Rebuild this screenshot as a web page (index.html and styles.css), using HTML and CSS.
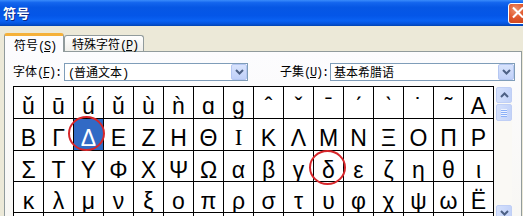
FILE: index.html
```html
<!DOCTYPE html>
<html>
<head>
<meta charset="utf-8">
<link rel="stylesheet" href="styles.css">
</head>
<body>
<div class="window">
  <div class="titlebar">
    <span class="title">符号</span>
    <span class="close"><svg width="21" height="21" viewBox="0 0 21 21"><path d="M6 6 L15 15 M15 6 L6 15" stroke="#fff" stroke-width="2.2" stroke-linecap="square"/></svg></span>
  </div>
  <div class="body">
    <div class="tabs">
      <div class="tab active">符号<span class="hw">(<u>S</u>)</span></div>
      <div class="tab">特殊字符<span class="hw">(<u>P</u>)</span></div>
    </div>
    <div class="panel">
      <div class="fontrow">
        <span class="lbl lbl1">字体<span class="hw">(<u>F</u>):</span></span>
        <div class="combo c1"><span class="ctext"><span class="hw">(</span>普通文本<span class="hw">)</span></span><span class="drop"><svg width="9" height="6" viewBox="0 0 9 6"><path d="M1 1 L4.5 4.5 L8 1" stroke="#4D6185" stroke-width="2" fill="none"/></svg></span></div>
        <span class="lbl lbl2">子集<span class="hw">(<u>U</u>):</span></span>
        <div class="combo c2"><span class="ctext">基本希腊语</span><span class="drop"><svg width="9" height="6" viewBox="0 0 9 6"><path d="M1 1 L4.5 4.5 L8 1" stroke="#4D6185" stroke-width="2" fill="none"/></svg></span></div>
      </div>
      <div class="gridwrap">
        <div class="grid">
          <div class="cell">ǔ</div><div class="cell">ū</div><div class="cell">ú</div><div class="cell">ǔ</div><div class="cell">ù</div><div class="cell">ǹ</div><div class="cell">ɑ</div><div class="cell">ɡ</div><div class="cell">ˆ</div><div class="cell">ˇ</div><div class="cell">ˉ</div><div class="cell">ˊ</div><div class="cell">ˋ</div><div class="cell">˙</div><div class="cell">˜</div><div class="cell">Α</div>
          <div class="cell">Β</div><div class="cell">Γ</div><div class="cell sel">Δ<span class="ring ring1"></span></div><div class="cell">Ε</div><div class="cell">Ζ</div><div class="cell">Η</div><div class="cell">Θ</div><div class="cell serif">Ι</div><div class="cell">Κ</div><div class="cell">Λ</div><div class="cell">Μ</div><div class="cell">Ν</div><div class="cell">Ξ</div><div class="cell">Ο</div><div class="cell">Π</div><div class="cell">Ρ</div>
          <div class="cell">Σ</div><div class="cell">Τ</div><div class="cell">Υ</div><div class="cell">Φ</div><div class="cell">Χ</div><div class="cell">Ψ</div><div class="cell">Ω</div><div class="cell">α</div><div class="cell">β</div><div class="cell">γ</div><div class="cell ringed">δ<span class="ring ring2"></span></div><div class="cell">ε</div><div class="cell">ζ</div><div class="cell">η</div><div class="cell">θ</div><div class="cell">ι</div>
          <div class="cell">κ</div><div class="cell">λ</div><div class="cell">μ</div><div class="cell">ν</div><div class="cell">ξ</div><div class="cell">ο</div><div class="cell">π</div><div class="cell">ρ</div><div class="cell">σ</div><div class="cell">τ</div><div class="cell">υ</div><div class="cell">φ</div><div class="cell">χ</div><div class="cell">ψ</div><div class="cell">ω</div><div class="cell">Ё</div>
          <div class="cell"></div><div class="cell"></div><div class="cell"></div><div class="cell"></div><div class="cell"></div><div class="cell"></div><div class="cell"></div><div class="cell"></div><div class="cell"></div><div class="cell"></div><div class="cell"></div><div class="cell"></div><div class="cell"></div><div class="cell"></div><div class="cell"></div><div class="cell"></div>
        </div>
        <div class="scrollbar">
          <div class="sbtn"><svg width="9" height="6" viewBox="0 0 9 6"><path d="M1 5 L4.5 1.5 L8 5" stroke="#4D6185" stroke-width="2" fill="none"/></svg></div>
          <div class="thumb"><span></span><span></span><span></span><span></span></div>
          <div class="track"></div>
          <div class="sbtn"><svg width="9" height="6" viewBox="0 0 9 6"><path d="M1 1 L4.5 4.5 L8 1" stroke="#4D6185" stroke-width="2" fill="none"/></svg></div>
        </div>
      </div>
    </div>
  </div>
</div>
</body>
</html>
```
FILE: styles.css
```css
html, body {
  margin: 0;
  padding: 0;
  width: 523px;
  height: 216px;
  overflow: hidden;
  background: #ECE9D8;
}
.window {
  width: 523px;
  height: 216px;
  overflow: hidden;
  font-family: "Noto Sans CJK SC", "Liberation Sans", sans-serif;
  font-size: 12px;
  color: #000;
}
.hw {
  font-family: "Liberation Mono", "DejaVu Sans Mono", monospace;
  font-size: 12px;
  letter-spacing: -1.2px;
}
.titlebar {
  height: 26px;
  display: flex;
  align-items: center;
  justify-content: space-between;
  padding-left: 3px;
  overflow: hidden;
  background: linear-gradient(#3A8CFB 0%, #1466EE 10%, #0657E4 28%, #0456E8 60%, #0A62F3 80%, #0553DA 92%, #0344B0 100%);
}
.title {
  color: #fff;
  font-weight: 700;
  font-size: 13px;
  line-height: 26px;
  text-shadow: 1px 1px 0 #0B2A8A;
  letter-spacing: 0.5px;
}
.close {
  width: 21px;
  height: 21px;
  box-sizing: border-box;
  margin-right: -6px;
  border: 1px solid #fff;
  border-radius: 3px;
  background: radial-gradient(circle at 35% 30%, #F0946F 0%, #E0582E 45%, #C43C16 100%);
  display: flex;
  align-items: center;
  justify-content: center;
}
.close svg { display: block; margin-left: -1px; margin-top: -1px; }
.body {
  padding: 7px 2px 0 4px;
}
.tabs {
  display: flex;
  align-items: flex-end;
  height: 18px;
  position: relative;
  z-index: 2;
}
.tab {
  box-sizing: border-box;
  height: 16px;
  line-height: 15px;
  padding: 0 7px;
  border: 1px solid #919B9C;
  border-bottom: none;
  border-radius: 3px 3px 0 0;
  background: linear-gradient(#FFFFFF, #F0EFEA);
  white-space: nowrap;
}
.tab.active {
  height: 19px;
  width: 60px;
  margin-bottom: -1px;
  padding: 0 9px;
  line-height: 17px;
  border-top: 3px solid #FFC73C;
  box-shadow: inset 0 -1px 0 #FCFCFE;
  background: #FCFCFE;
  border-color: #E68B2C #919B9C #919B9C #919B9C;
  border-top-color: #F5B13A;
}
.tab + .tab {
  width: 80px;
  margin-left: 0;
}
.panel {
  box-sizing: border-box;
  width: 518px;
  height: 200px;
  border: 1px solid #919B9C;
  background: linear-gradient(#FCFCFE, #F7F6F2);
  padding: 11px 0 0 8px;
}
.fontrow {
  display: flex;
  align-items: center;
  height: 18px;
}
.lbl {
  white-space: nowrap;
  line-height: 18px;
}
.lbl1 { width: 51px; }
.lbl2 { width: 80px; text-align: right; padding-right: 2px; }
.combo {
  box-sizing: border-box;
  height: 18px;
  border: 1px solid #7F9DB9;
  background: #fff;
  display: flex;
  align-items: stretch;
}
.c1 { width: 184px; }
.c2 { width: 185px; }
.ctext {
  flex: 1;
  padding-left: 3px;
  line-height: 16px;
  white-space: nowrap;
}
.drop {
  width: 16px;
  box-sizing: border-box;
  border: 1px solid #B5C7F2;
  border-radius: 2px;
  background: linear-gradient(#D8E3FC, #C0D0F8);
  display: flex;
  align-items: center;
  justify-content: center;
}
.drop svg { display: block; }
.gridwrap {
  display: flex;
  align-items: flex-start;
  margin-top: 5px;
  gap: 2px;
}
.grid {
  display: grid;
  grid-template-columns: repeat(16, 29px);
  grid-template-rows: 31px 31px 30px 30px 30px;
  gap: 1px;
  background: #000;
  border: 1px solid #000;
}
.cell {
  background: #fff;
  text-align: center;
  font-family: "Liberation Sans", "DejaVu Sans", sans-serif;
  font-size: 23px;
  line-height: 26px;
  padding-top: 6px;
  box-sizing: border-box;
  overflow: visible;
  white-space: nowrap;
}
.cell.serif { font-family: "Liberation Serif", serif; }
.cell.sel {
  background: #316AC5;
  color: #fff;
  outline: 1px dotted #000;
  outline-offset: 0;
  position: relative;
  z-index: 1;
}
.cell.ringed {
  position: relative;
  z-index: 1;
}
.ring {
  position: absolute;
  border: 2px solid #D7262A;
  border-radius: 50%;
  box-sizing: border-box;
}
.ring1 { left: -6px; top: -3px; width: 37px; height: 35px; }
.ring2 { left: -5px; top: -1px; width: 37px; height: 35px; }
.scrollbar {
  width: 16px;
  height: 134px;
  margin-top: 1px;
  display: flex;
  flex-direction: column;
  background: #FAF9F5;
}
.sbtn, .thumb {
  box-sizing: border-box;
  width: 16px;
  height: 16px;
  border: 1px solid #C0CFF5;
  border-radius: 2px;
  background: linear-gradient(90deg, #D4E0FC, #C3D3F9);
  display: flex;
  align-items: center;
  justify-content: center;
}
.sbtn svg { display: block; }
.thumb {
  margin-top: 1px;
  height: 17px;
  flex-direction: column;
  gap: 1px;
}
.thumb span {
  display: block;
  width: 6px;
  height: 1px;
  background: #EEF3FE;
  box-shadow: 0 1px 0 #8CB0F8;
}
.track { flex: 1; }
```
